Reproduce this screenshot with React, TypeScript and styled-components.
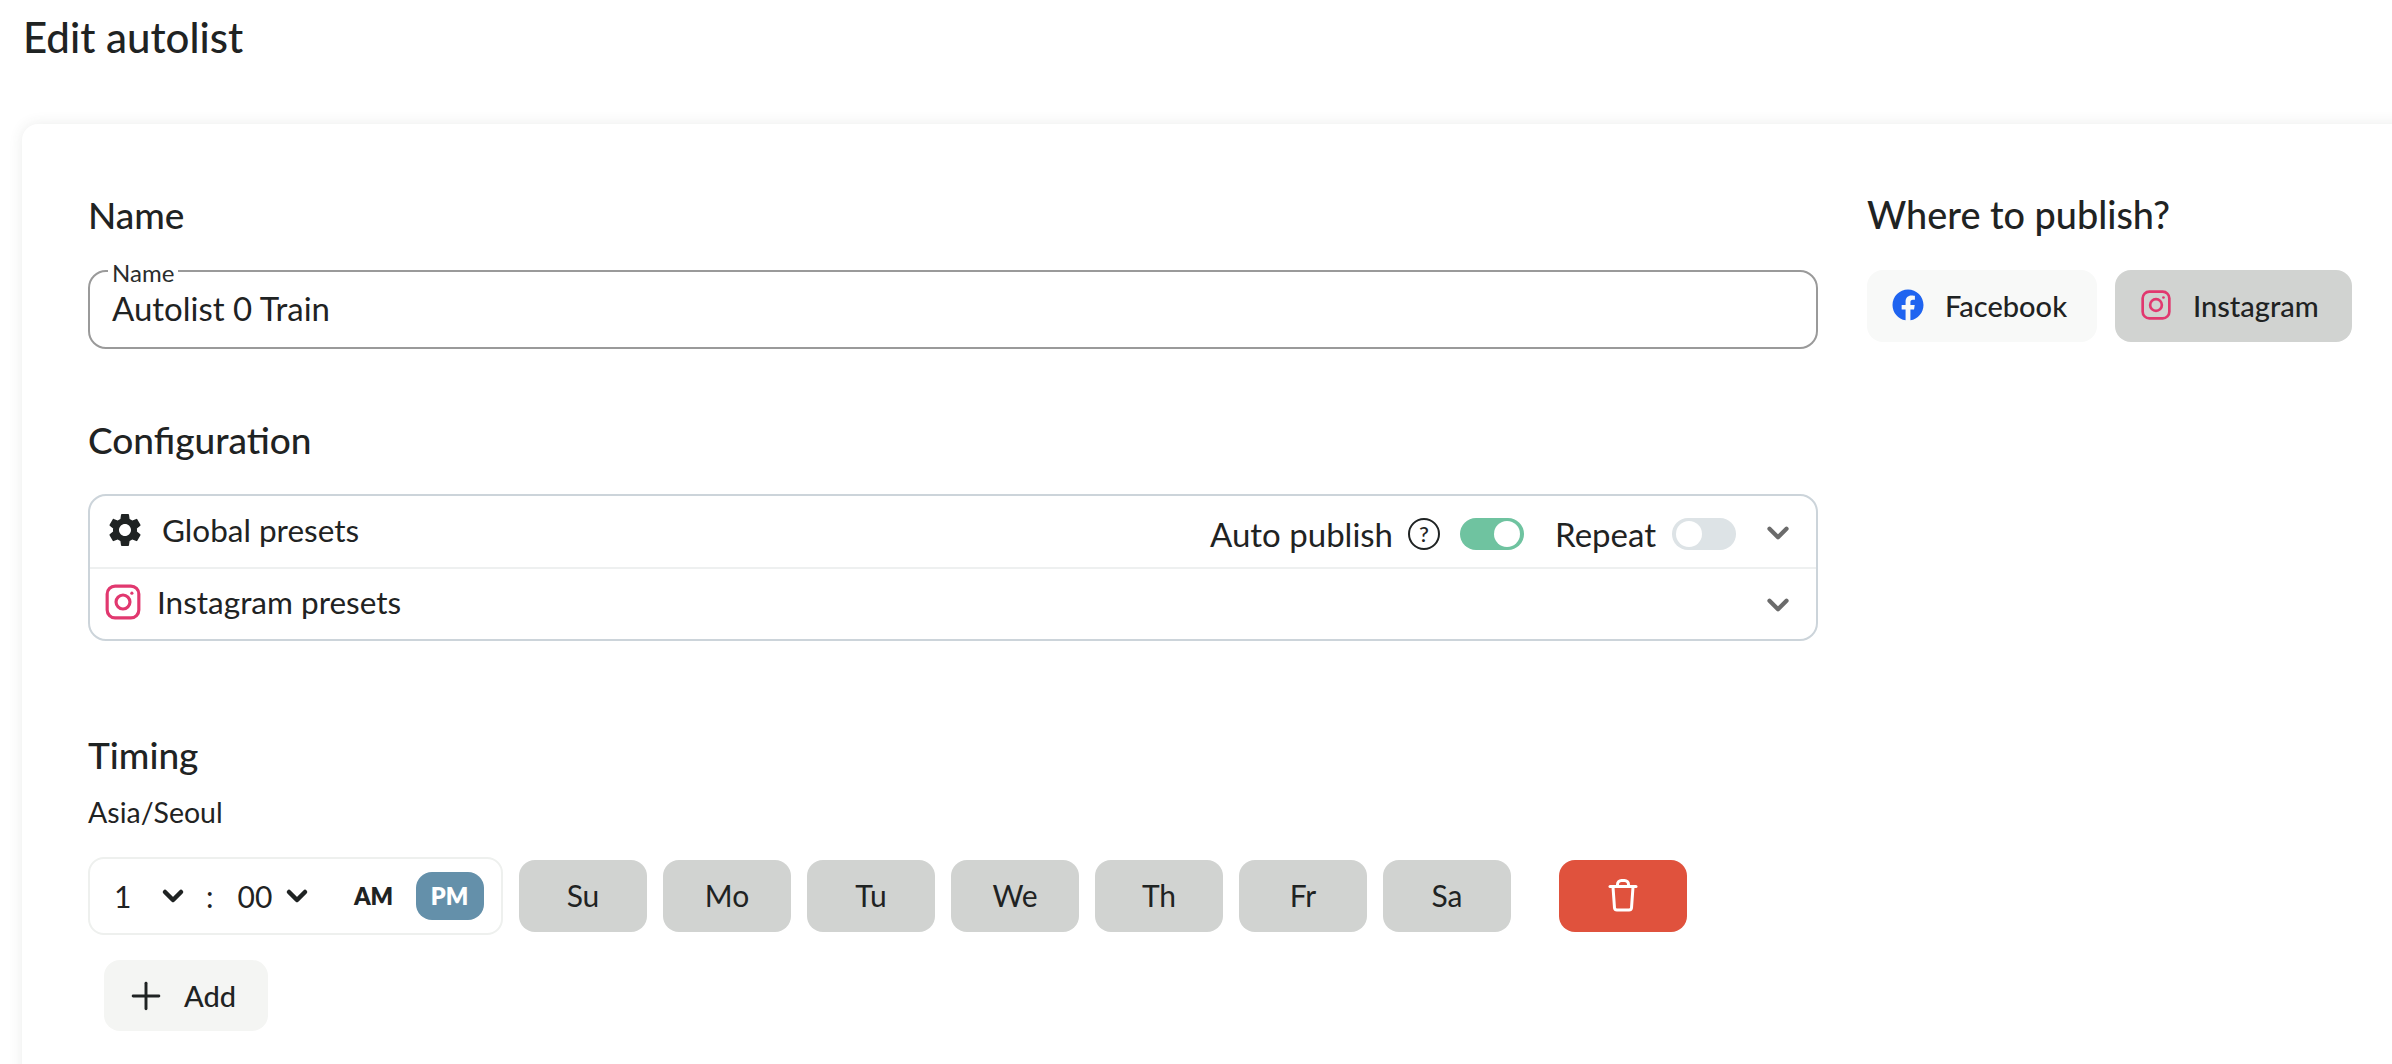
import React from "react";
import styled, { createGlobalStyle } from "styled-components";
import { FaFacebook } from "react-icons/fa";
import { MdSettings } from "react-icons/md";
import { FiChevronDown, FiPlus } from "react-icons/fi";

const GlobalStyle = createGlobalStyle`
  html, body {
    margin: 0;
    height: 100%;
    overflow: hidden;
    background: #ffffff;
  }
  body {
    font-family: "Lato", "Noto Sans", sans-serif;
    color: #1f2323;
  }
`;

const Page = styled.div`
  width: 2392px;
  height: 1064px;
  overflow: hidden;
`;

const Title = styled.h1`
  margin: 0;
  padding: 13px 0 0 23px;
  height: 124px;
  box-sizing: border-box;
  font-size: 42px;
  line-height: 48px;
  font-weight: 500;
`;

const Card = styled.div`
  margin-left: 22px;
  width: 2500px;
  height: 1100px;
  box-sizing: border-box;
  padding: 68px 0 0 66px;
  border-radius: 16px;
  background: #fff;
  box-shadow: 0 0 14px rgba(60, 70, 60, 0.1);
  display: grid;
  grid-template-columns: 1730px 1fr;
  column-gap: 49px;
  align-items: start;
`;

const Column = styled.div`
  display: flex;
  flex-direction: column;
`;

const Heading = styled.h2`
  margin: 0;
  font-size: 37px;
  line-height: 46px;
  font-weight: 500;
`;

const PublishHeading = styled(Heading)`
  font-size: 37.8px;
`;

const InputBox = styled.div`
  position: relative;
  margin-top: 32px;
  padding: 0 0 3px 22px;
  height: 79px;
  box-sizing: border-box;
  border: 2px solid #9a9a9a;
  border-radius: 18px;
  display: flex;
  align-items: center;
`;

const InputLegend = styled.span`
  position: absolute;
  top: -11px;
  left: 18px;
  padding: 0 4px;
  background: #fff;
  font-size: 24px;
  line-height: 24px;
  color: #2a2d2d;
`;

const InputValue = styled.div`
  font-size: 33px;
  line-height: 40px;
`;

const ConfigHeading = styled(Heading)`
  margin-top: 68px;
`;

const Accordion = styled.div`
  margin-top: 31px;
  height: 147px;
  box-sizing: border-box;
  border: 2px solid #ccd4da;
  border-radius: 18px;
  display: flex;
  flex-direction: column;
`;

const AccordionRow = styled.div<{ $divider?: boolean; $pad: number; $gap: number }>`
  flex: 1;
  display: flex;
  align-items: center;
  padding: 0 21px 3px ${(p) => p.$pad}px;
  gap: ${(p) => p.$gap}px;
  font-size: 31.5px;
  border-bottom: ${(p) => (p.$divider ? "2px solid #eef0f0" : "none")};
`;

const Spacer = styled.div`
  flex: 1;
`;

const Label = styled.span`
  font-size: 33px;
  line-height: 40px;
`;

const Control = styled.div<{ $gap: number; $after: number }>`
  display: flex;
  align-items: center;
  gap: ${(p) => p.$gap}px;
  margin: 8px ${(p) => p.$after}px 0 0;
`;

const HelpIcon = styled.span`
  width: 32px;
  height: 32px;
  margin-right: 5px;
  box-sizing: border-box;
  border: 2px solid #1f2323;
  border-radius: 50%;
  display: flex;
  align-items: center;
  justify-content: center;
  font-size: 22px;
  font-weight: 500;
`;

const Toggle = styled.div<{ $on?: boolean }>`
  width: 64px;
  height: 32px;
  border-radius: 16px;
  background: ${(p) => (p.$on ? "#6fc3a0" : "#dde3e6")};
  display: flex;
  align-items: center;
  justify-content: ${(p) => (p.$on ? "flex-end" : "flex-start")};
  padding: 0 4px;
  box-sizing: border-box;

  &::after {
    content: "";
    width: 26px;
    height: 26px;
    border-radius: 50%;
    background: #fff;
  }
`;

const Chevron = styled(FiChevronDown)`
  width: 34px;
  height: 34px;
  margin-top: 6px;
  stroke-width: 3;
  color: #6b6b6b;
  flex: none;
`;

const TimingHeading = styled(Heading)`
  margin-top: 91px;
`;

const Timezone = styled.div`
  margin-top: 16px;
  font-size: 28.5px;
  line-height: 36px;
`;

const TimingRow = styled.div`
  margin-top: 27px;
  display: flex;
  align-items: center;
  gap: 16px;
`;

const TimeBox = styled.div`
  width: 415px;
  height: 78px;
  box-sizing: border-box;
  border: 2px solid #eef0ee;
  border-radius: 16px;
  display: flex;
  align-items: center;
  padding-left: 24px;
  font-size: 30px;
`;

const TimeValue = styled.span<{ $width: number }>`
  width: ${(p) => p.$width}px;
`;

const Colon = styled.span`
  margin: 0 24px 0 17px;
  font-size: 30px;
`;

const TimeChevron = styled(FiChevronDown)`
  width: 32px;
  height: 32px;
  stroke-width: 3.4;
  color: #1f2323;
  flex: none;
`;

const Meridiem = styled.span<{ $active?: boolean }>`
  width: 68px;
  height: 48px;
  border-radius: 16px;
  display: flex;
  align-items: center;
  justify-content: center;
  font-size: 23.5px;
  font-weight: 800;
  color: ${(p) => (p.$active ? "#fff" : "#1f2323")};
  background: ${(p) => (p.$active ? "#6490aa" : "transparent")};
`;

const Meridiems = styled.div`
  margin-left: 27px;
  display: flex;
  gap: 8px;
`;

const DayButton = styled.button`
  width: 128px;
  height: 72px;
  border: none;
  padding: 0 0 2px;
  border-radius: 16px;
  background: #d1d3d1;
  color: #1f2323;
  font-family: inherit;
  font-size: 30px;
`;

const DeleteButton = styled(DayButton)`
  margin-left: 32px;
  background: #e0523d;
  color: #fff;
  display: flex;
  align-items: center;
  justify-content: center;
`;

const AddButton = styled.button`
  margin: 25px 0 0 16px;
  width: 164px;
  height: 71px;
  border: none;
  padding: 0 0 0 20px;
  border-radius: 16px;
  background: #f4f5f3;
  color: #1f2323;
  font-family: inherit;
  font-size: 29px;
  font-weight: 500;
  display: flex;
  align-items: center;
  gap: 16px;
`;

const PublishRow = styled.div`
  margin-top: 32px;
  display: flex;
  gap: 18px;
`;

const PublishButton = styled.button<{ $selected?: boolean; $width: number }>`
  width: ${(p) => p.$width}px;
  height: 72px;
  border: none;
  padding: 0 0 2px 25px;
  border-radius: 16px;
  background: ${(p) => (p.$selected ? "#d1d3d1" : "#f8f9f8")};
  color: #1f2323;
  font-family: inherit;
  font-size: 29px;
  font-weight: 500;
  display: flex;
  align-items: center;
  gap: 21px;
`;

function InstagramIcon({ size }: { size: number }) {
  return (
    <svg width={size} height={size} viewBox="0 0 24 24" fill="none" stroke="#e1386f" strokeWidth="2">
      <rect x="2" y="2" width="20" height="20" rx="5" />
      <circle cx="12" cy="12" r="4.4" />
      <circle cx="17.6" cy="6.4" r="1" fill="#e1386f" stroke="none" />
    </svg>
  );
}

function TrashIcon() {
  return (
    <svg width="30" height="34" viewBox="0 0 30 34" fill="none" stroke="#fff" strokeWidth="3" strokeLinejoin="round" strokeLinecap="round">
      <path d="M2 8.5h26" />
      <path d="M9.5 8V6.5a4 4 0 0 1 4-4h3a4 4 0 0 1 4 4V8" />
      <path d="M5 9l1.5 21a2.5 2.5 0 0 0 2.5 2h12a2.5 2.5 0 0 0 2.5-2L25 9" />
    </svg>
  );
}

const days = ["Su", "Mo", "Tu", "We", "Th", "Fr", "Sa"];

export default function App() {
  return (
    <Page>
      <GlobalStyle />
      <Title>Edit autolist</Title>
      <Card>
        <Column>
          <Heading>Name</Heading>
          <InputBox>
            <InputLegend>Name</InputLegend>
            <InputValue>Autolist 0 Train</InputValue>
          </InputBox>

          <ConfigHeading>Configuration</ConfigHeading>
          <Accordion>
            <AccordionRow $divider $pad={15} $gap={17}>
              <MdSettings size={40} color="#1f2323" />
              <span>Global presets</span>
              <Spacer />
              <Control $gap={15} $after={14}>
                <Label>Auto publish</Label>
                <HelpIcon>?</HelpIcon>
                <Toggle $on />
              </Control>
              <Control $gap={16} $after={8}>
                <Label>Repeat</Label>
                <Toggle />
              </Control>
              <Chevron />
            </AccordionRow>
            <AccordionRow $pad={14} $gap={15}>
              <InstagramIcon size={38} />
              <span>Instagram presets</span>
              <Spacer />
              <Chevron />
            </AccordionRow>
          </Accordion>

          <TimingHeading>Timing</TimingHeading>
          <Timezone>Asia/Seoul</Timezone>
          <TimingRow>
            <TimeBox>
              <TimeValue $width={43}>1</TimeValue>
              <TimeChevron />
              <Colon>:</Colon>
              <TimeValue $width={43}>00</TimeValue>
              <TimeChevron />
              <Meridiems>
                <Meridiem>AM</Meridiem>
                <Meridiem $active>PM</Meridiem>
              </Meridiems>
            </TimeBox>
            {days.map((d) => (
              <DayButton key={d}>{d}</DayButton>
            ))}
            <DeleteButton>
              <TrashIcon />
            </DeleteButton>
          </TimingRow>
          <AddButton>
            <FiPlus size={44} strokeWidth={1.6} />
            Add
          </AddButton>
        </Column>

        <Column>
          <PublishHeading>Where to publish?</PublishHeading>
          <PublishRow>
            <PublishButton $width={230}>
              <FaFacebook size={32} color="#1f64f0" />
              Facebook
            </PublishButton>
            <PublishButton $selected $width={237}>
              <InstagramIcon size={32} />
              Instagram
            </PublishButton>
          </PublishRow>
        </Column>
      </Card>
    </Page>
  );
}
